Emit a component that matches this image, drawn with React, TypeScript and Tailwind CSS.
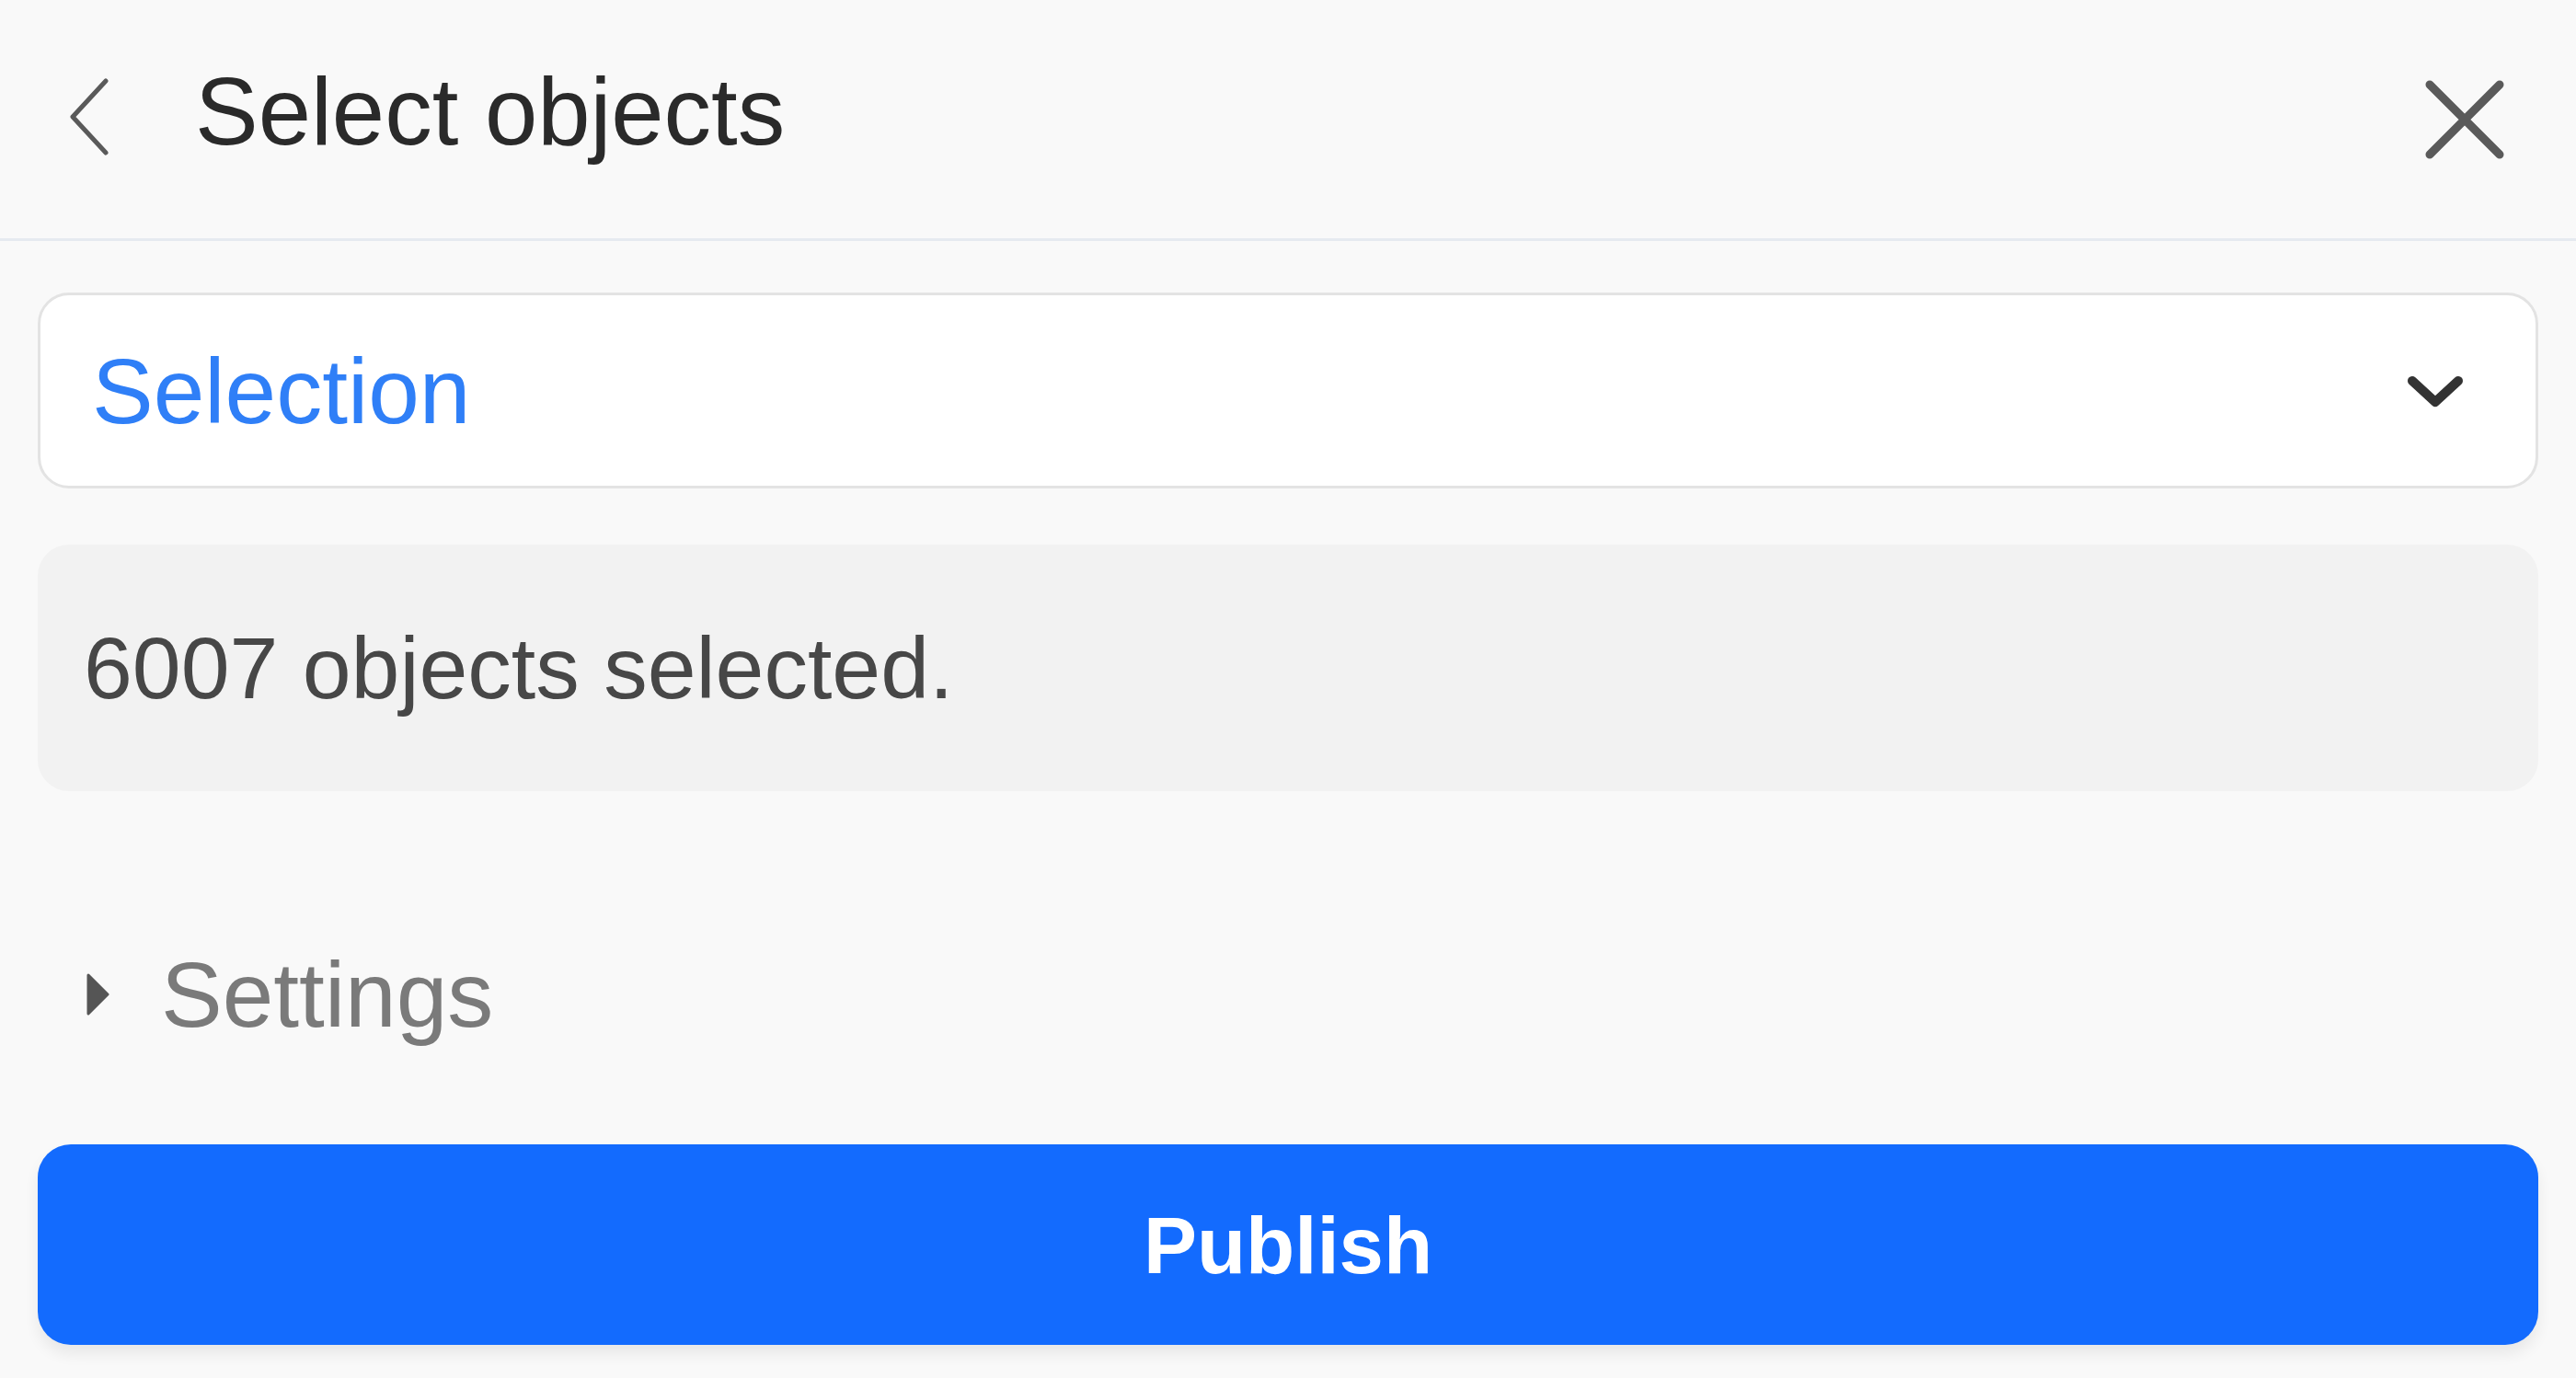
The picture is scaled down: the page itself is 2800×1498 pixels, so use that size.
import React from 'react';

export default function App() {
  return (
    <div className="min-h-screen w-full bg-[#f9f9f9] font-['Liberation_Sans',Arial,sans-serif]">
      {/* header */}
      <div className="flex h-[262px] items-center border-b-[3px] border-[#e6eaf0] pl-[75px] pr-[77px]">
        <svg width="46" height="84" viewBox="0 0 46 84" fill="none" className="mb-[6px] shrink-0">
          <path d="M40 3 L4 42 L40 81" stroke="#5a5a5a" strokeWidth="5" strokeLinecap="round" strokeLinejoin="round" />
        </svg>
        <h1 className="ml-[91px] flex-1 pb-[16px] text-[103px] leading-none text-[#2a2a2a]">Select objects</h1>
        <svg width="88" height="88" viewBox="0 0 88 88" fill="none" className="shrink-0">
          <path d="M6 6 L82 82 M82 6 L6 82" stroke="#5a5a5a" strokeWidth="9" strokeLinecap="round" />
        </svg>
      </div>

      <div className="flex flex-col px-[41px] pt-[56px]">
        {/* dropdown */}
        <div className="flex h-[213px] items-center justify-between rounded-[34px] border-[3px] border-[#e3e3e3] bg-white pl-[56px] pr-[78px]">
          <span className="text-[100px] leading-none text-[#2f7ff7]">Selection</span>
          <svg width="62" height="40" viewBox="0 0 62 40" fill="none">
            <path d="M6 9 L31 32 L56 9" stroke="#333" strokeWidth="10" strokeLinecap="round" strokeLinejoin="round" />
          </svg>
        </div>

        {/* info box */}
        <div className="mt-[61px] flex h-[268px] items-center rounded-[34px] bg-[#f2f2f2] px-[50px]">
          <span className="text-[95px] leading-none text-[#474747]">6007 objects selected.</span>
        </div>

        {/* settings */}
        <div className="mt-[171px] flex items-center gap-[56px] pl-[52px]">
          <svg width="26" height="48" viewBox="0 0 26 48" className="shrink-0">
            <path d="M3 3 L24 24 L3 45 Z" fill="#555" stroke="#555" strokeWidth="3" strokeLinejoin="round" />
          </svg>
          <span className="text-[100px] leading-none text-[#7a7a7a]">Settings</span>
        </div>

        {/* publish */}
        <button className="mt-[113px] flex h-[218px] items-center justify-center rounded-[36px] bg-[#136bfe] shadow-[0_10px_16px_rgba(0,0,0,0.07)]">
          <span className="text-[87px] font-bold leading-none text-white">Publish</span>
        </button>
      </div>
    </div>
  );
}
